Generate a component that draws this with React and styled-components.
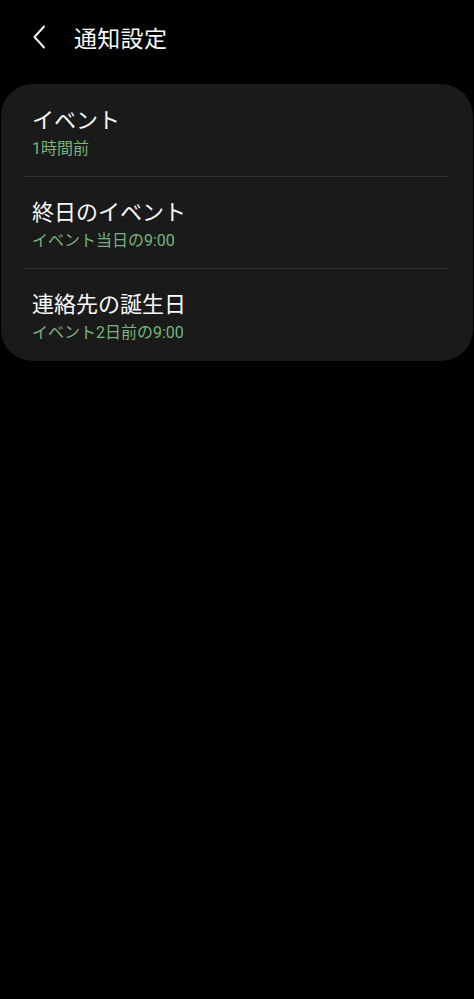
import styled, { createGlobalStyle } from "styled-components";

const GlobalStyle = createGlobalStyle`
  html, body {
    margin: 0;
    padding: 0;
    background: #000;
  }
  body {
    font-family: "Roboto", "Noto Sans CJK JP", sans-serif;
    color: #fafafa;
  }
`;

const items = [
  { title: "イベント", sub: "1時間前" },
  { title: "終日のイベント", sub: "イベント当日の9:00" },
  { title: "連絡先の誕生日", sub: "イベント2日前の9:00" },
];

export default function App() {
  return (
    <Page>
      <GlobalStyle />
      <Header>
        <BackButton aria-label="戻る">
          <svg width="16" height="24" viewBox="0 0 16 24">
            <path
              d="M12 1.5 L2.5 12 L12 22.5"
              fill="none"
              stroke="#f2f2f2"
              strokeWidth="2"
              strokeLinecap="round"
              strokeLinejoin="round"
            />
          </svg>
        </BackButton>
        <Title>通知設定</Title>
      </Header>
      <Card>
        {items.map((item, i) => (
          <Item key={item.title} last={i === items.length - 1}>
            <ItemTitle>{item.title}</ItemTitle>
            <ItemSub>{item.sub}</ItemSub>
          </Item>
        ))}
      </Card>
    </Page>
  );
}

const Page = styled.div`
  min-height: 999px;
  background: #000;
`;

const Header = styled.div`
  height: 84px;
  display: flex;
  align-items: center;
  padding: 0 0 10px 0;
  box-sizing: border-box;
`;

const BackButton = styled.div`
  width: 74px;
  display: flex;
  justify-content: flex-start;
  padding-left: 32px;
  box-sizing: border-box;
  svg {
    display: block;
  }
`;

const Title = styled.div`
  font-size: 23px;
  letter-spacing: 0.3px;
  color: #fafafa;
`;

const Card = styled.div`
  margin: 0 1px;
  padding: 2px 0 0;
  background: #1a1a1a;
  border-radius: 32px;
`;

const Item = styled.div`
  position: relative;
  padding: 19px 31px 16px;
  height: 91px;
  box-sizing: border-box;
  &::after {
    content: "";
    display: ${(p) => (p.last ? "none" : "block")};
    position: absolute;
    left: 24px;
    right: 25px;
    bottom: 0;
    height: 1px;
    background: #343434;
  }
  & + & {
    margin-top: 1px;
  }
`;

const ItemTitle = styled.div`
  font-size: 22px;
  line-height: 32px;
  color: #fafafa;
`;

const ItemSub = styled.div`
  font-size: 16px;
  line-height: 24px;
  color: #76b47c;
`;
